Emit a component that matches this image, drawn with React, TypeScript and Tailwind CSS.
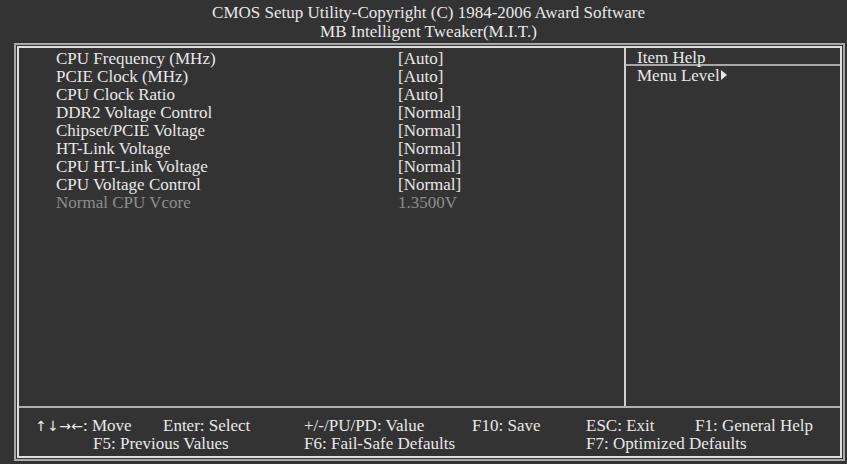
const rows: { label: string; value: string; disabled?: boolean }[] = [
  { label: 'CPU Frequency (MHz)', value: '[Auto]' },
  { label: 'PCIE Clock (MHz)', value: '[Auto]' },
  { label: 'CPU Clock Ratio', value: '[Auto]' },
  { label: 'DDR2 Voltage Control', value: '[Normal]' },
  { label: 'Chipset/PCIE Voltage', value: '[Normal]' },
  { label: 'HT-Link Voltage', value: '[Normal]' },
  { label: 'CPU HT-Link Voltage', value: '[Normal]' },
  { label: 'CPU Voltage Control', value: '[Normal]' },
  { label: 'Normal CPU Vcore', value: '1.3500V', disabled: true },
];

export default function App() {
  return (
    <div
      className="w-[847px] h-[464px] bg-[#333333] text-[#e8e8e8] text-[17px] leading-[18px] overflow-hidden"
      style={{ fontFamily: '"Liberation Serif", "Times New Roman", serif' }}
    >
      {/* header */}
      <div className="h-[43px] flex flex-col items-center pt-[3px] pl-[10px] leading-[19px]">
        <div>CMOS Setup Utility-Copyright (C) 1984-2006 Award Software</div>
        <div>MB Intelligent Tweaker(M.I.T.)</div>
      </div>

      <div className="ml-[14px] w-[831px] h-[418px] border-2 border-[#a8a8a8] p-[1px]">
        <div className="h-full border-2 border-[#e0e0e0] flex flex-col">
          <div className="flex flex-1">
            {/* settings list */}
            <div className="w-[605px] pt-[2px] pl-[37px]">
              {rows.map((r) => (
                <div
                  key={r.label}
                  className={'flex h-[18px] ' + (r.disabled ? 'text-[#8e8e8e]' : '')}
                >
                  <div className="w-[342px]">{r.label}</div>
                  <div>{r.value}</div>
                </div>
              ))}
            </div>

            {/* help panel */}
            <div className="flex-1 border-l-2 border-[#d0d0d0]">
              <div className="h-[18px] pl-[11px] pt-[1px] border-b-2 border-[#a8a8a8]">Item Help</div>
              <div className="pl-[11px] pt-[1px] flex items-center">
                Menu Level
                <svg width="6" height="10" viewBox="0 0 6 10" className="ml-[1px] -mt-[2px]">
                  <path d="M0 0 L6 5 L0 10 Z" fill="#e8e8e8" />
                </svg>
              </div>
            </div>
          </div>

          {/* key legend */}
          <div className="h-[50px] border-t-2 border-[#b0b0b0] pt-[9px]">
            <div className="flex h-[18px] pl-[16px]">
              <div className="w-[128px] flex">
                <span className="flex text-[14px]" style={{ fontFamily: '"DejaVu Sans", sans-serif' }}>
                  <span className="w-[12px] text-center">↑</span>
                  <span className="w-[12px] text-center">↓</span>
                  <span className="w-[12px] text-center">→</span>
                  <span className="w-[12px] text-center">←</span>
                </span>
                <span>: Move</span>
              </div>
              <div className="w-[141px]">Enter: Select</div>
              <div className="w-[168px]">+/-/PU/PD: Value</div>
              <div className="w-[114px]">F10: Save</div>
              <div className="w-[109px]">ESC: Exit</div>
              <div>F1: General Help</div>
            </div>
            <div className="flex h-[18px] pl-[74px]">
              <div className="w-[211px]">F5: Previous Values</div>
              <div className="w-[282px]">F6: Fail-Safe Defaults</div>
              <div>F7: Optimized Defaults</div>
            </div>
          </div>
        </div>
      </div>
    </div>
  );
}
